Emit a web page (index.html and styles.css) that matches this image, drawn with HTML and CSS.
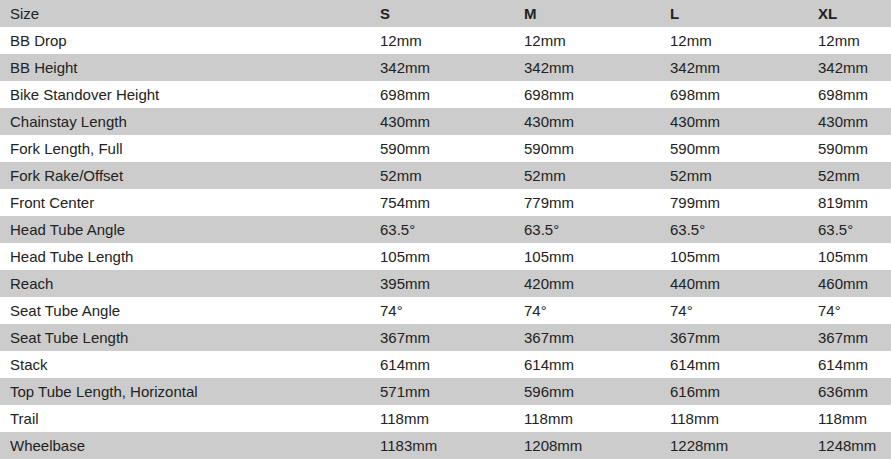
FILE: index.html
```html
<!DOCTYPE html>
<html>
<head>
<meta charset="utf-8">
<link rel="stylesheet" href="styles.css">
</head>
<body>
<table class="geo">
<colgroup>
<col class="c-label"><col class="c-s"><col class="c-m"><col class="c-l"><col class="c-xl">
</colgroup>
<thead>
<tr><th class="lbl">Size</th><th>S</th><th>M</th><th>L</th><th>XL</th></tr>
</thead>
<tbody>
<tr><td>BB Drop</td><td>12mm</td><td>12mm</td><td>12mm</td><td>12mm</td></tr>
<tr><td>BB Height</td><td>342mm</td><td>342mm</td><td>342mm</td><td>342mm</td></tr>
<tr><td>Bike Standover Height</td><td>698mm</td><td>698mm</td><td>698mm</td><td>698mm</td></tr>
<tr><td>Chainstay Length</td><td>430mm</td><td>430mm</td><td>430mm</td><td>430mm</td></tr>
<tr><td>Fork Length, Full</td><td>590mm</td><td>590mm</td><td>590mm</td><td>590mm</td></tr>
<tr><td>Fork Rake/Offset</td><td>52mm</td><td>52mm</td><td>52mm</td><td>52mm</td></tr>
<tr><td>Front Center</td><td>754mm</td><td>779mm</td><td>799mm</td><td>819mm</td></tr>
<tr><td>Head Tube Angle</td><td>63.5°</td><td>63.5°</td><td>63.5°</td><td>63.5°</td></tr>
<tr><td>Head Tube Length</td><td>105mm</td><td>105mm</td><td>105mm</td><td>105mm</td></tr>
<tr><td>Reach</td><td>395mm</td><td>420mm</td><td>440mm</td><td>460mm</td></tr>
<tr><td>Seat Tube Angle</td><td>74°</td><td>74°</td><td>74°</td><td>74°</td></tr>
<tr><td>Seat Tube Length</td><td>367mm</td><td>367mm</td><td>367mm</td><td>367mm</td></tr>
<tr><td>Stack</td><td>614mm</td><td>614mm</td><td>614mm</td><td>614mm</td></tr>
<tr><td>Top Tube Length, Horizontal</td><td>571mm</td><td>596mm</td><td>616mm</td><td>636mm</td></tr>
<tr><td>Trail</td><td>118mm</td><td>118mm</td><td>118mm</td><td>118mm</td></tr>
<tr><td>Wheelbase</td><td>1183mm</td><td>1208mm</td><td>1228mm</td><td>1248mm</td></tr>
</tbody>
</table>
</body>
</html>
```
FILE: styles.css
```css
html, body {
  margin: 0;
  padding: 0;
  background: #fff;
}
.geo {
  width: 891px;
  border-collapse: collapse;
  table-layout: fixed;
  font-family: "Liberation Sans", Arial, sans-serif;
  font-size: 15px;
  color: #222;
}
.c-label { width: 370px; }
.c-s { width: 144px; }
.c-m { width: 146px; }
.c-l { width: 148px; }
.c-xl { width: 83px; }
.geo th, .geo td {
  height: 27px;
  padding: 0 0 0 10px;
  text-align: left;
  vertical-align: middle;
  line-height: 27px;
  white-space: nowrap;
  box-sizing: border-box;
}
.geo th { font-weight: bold; }
.geo th.lbl { font-weight: normal; }
.geo thead tr { background: #ccc; }
.geo tbody tr:nth-child(even) { background: #ccc; }
```
